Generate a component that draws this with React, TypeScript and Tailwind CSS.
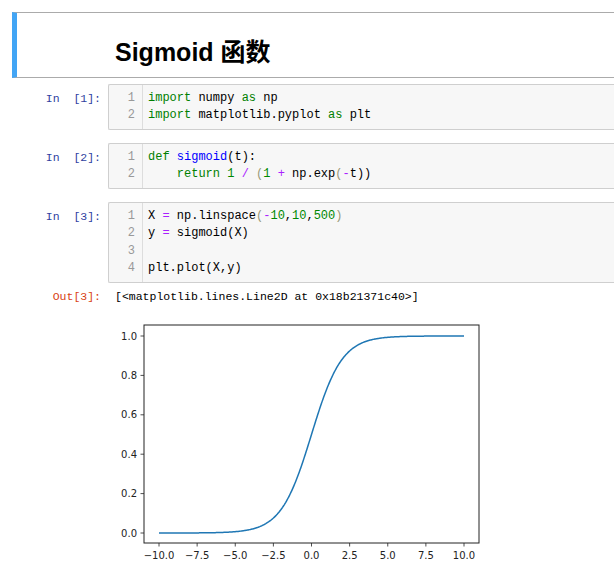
import React from 'react';

// small token helpers for the code cells
const K = ({ children }: { children: React.ReactNode }) => <span className="text-[#008000]">{children}</span>;
const N = ({ children }: { children: React.ReactNode }) => <span className="text-[#008800]">{children}</span>;
const O = ({ children }: { children: React.ReactNode }) => <span className="text-[#aa22ff]">{children}</span>;
const B = ({ children }: { children: React.ReactNode }) => <span className="text-[#999977]">{children}</span>;
const D = ({ children }: { children: React.ReactNode }) => <span className="text-[#0000ff]">{children}</span>;

const mono = "font-['Liberation_Mono','DejaVu_Sans_Mono',monospace]";

const Prompt = ({ label, out }: { label: string; out?: boolean }) => (
  <div className={`w-[108px] shrink-0 pr-[7px] text-right text-[11.5px] leading-[17.5px] whitespace-pre ${mono} ${out ? 'text-[#d84315]' : 'text-[#303f9f] pt-[5.5px]'}`}>
    {label}
  </div>
);

const CodeCell = ({ n, lines }: { n: number; lines: React.ReactNode[] }) => (
  <div className="flex">
    <Prompt label={`In\u00a0\u00a0[${n}]:`} />
    <div className={`flex flex-1 border border-r-0 border-[#cfcfcf] rounded-l-[2px] bg-[#f7f7f7] text-[12px] leading-[17.5px] ${mono}`}>
      <div className="w-[34px] shrink-0 border-r border-[#dddddd] py-[4.5px] pr-[7px] text-right text-[#999999]">
        {lines.map((_, i) => (
          <div key={i}>{i + 1}</div>
        ))}
      </div>
      <div className="py-[4.5px] pl-[5px] text-black whitespace-pre">
        {lines.map((l, i) => (
          <div key={i} className="h-[17.5px]">{l}</div>
        ))}
      </div>
    </div>
  </div>
);

const Plot = () => {
  const xs = (t: number) => 203.5 + 15.25 * t;
  const ys = (v: number) => 225 - 197 * v;
  const pts: string[] = [];
  for (let i = 0; i <= 400; i++) {
    const t = -10 + (20 * i) / 400;
    const v = 1 / (1 + Math.exp(-t));
    pts.push(`${xs(t).toFixed(2)},${ys(v).toFixed(2)}`);
  }
  const yt = [0, 0.2, 0.4, 0.6, 0.8, 1.0];
  const xt = [-10, -7.5, -5, -2.5, 0, 2.5, 5, 7.5, 10];
  const fmt = (t: number) => (t < 0 ? '\u2212' : '') + Math.abs(t).toFixed(1);
  return (
    <svg width="400" height="268" viewBox="0 0 400 268" className="block">
      <polyline points={pts.join(' ')} fill="none" stroke="#1f77b4" strokeWidth="1.5" />
      <rect x="36" y="17" width="335" height="218" fill="none" stroke="#222" strokeWidth="1" />
      <g fontFamily="'DejaVu Sans', sans-serif" fontSize="10" fill="#222">
        {yt.map((v) => (
          <g key={v}>
            <line x1="32.5" x2="36" y1={ys(v)} y2={ys(v)} stroke="#222" strokeWidth="0.8" />
            <text x="29" y={ys(v) + 3.6} textAnchor="end">{v.toFixed(1)}</text>
          </g>
        ))}
        {xt.map((t) => (
          <g key={t}>
            <line x1={xs(t)} x2={xs(t)} y1="235" y2="238.5" stroke="#222" strokeWidth="0.8" />
            <text x={xs(t)} y="250.5" textAnchor="middle">{fmt(t)}</text>
          </g>
        ))}
      </g>
    </svg>
  );
};

export default function App() {
  return (
    <div className="w-[614px] h-[581px] overflow-hidden bg-white">
      <div className="w-[720px] pt-[12px]">
        {/* markdown header cell */}
        <div className="ml-[12px] border-y border-[#ababab] border-l-[5px] border-l-[#42a5f5]">
          <h1 className="pl-[98px] pt-[23px] pb-[9px] text-[25px] leading-[32px] font-bold text-black font-['Liberation_Sans','Noto_Sans_CJK_SC',sans-serif]">
            Sigmoid 函数
          </h1>
        </div>

        <div className="mt-[6px] flex flex-col gap-[13px]">
          <CodeCell
            n={1}
            lines={[
              <><K>import</K> numpy <K>as</K> np</>,
              <><K>import</K> matplotlib.pyplot <K>as</K> plt</>,
            ]}
          />
          <CodeCell
            n={2}
            lines={[
              <><K>def</K> <D>sigmoid</D>(t):</>,
              <>    <K>return</K> <N>1</N> <O>/</O> <B>(</B><N>1</N> <O>+</O> np.exp<B>(</B><O>-</O>t))</>,
            ]}
          />
          <div>
            <CodeCell
              n={3}
              lines={[
                <>X <O>=</O> np.linspace<B>(</B><O>-</O><N>10</N>,<N>10</N>,<N>500</N><B>)</B></>,
                <>y <O>=</O> sigmoid(X)</>,
                <></>,
                <>plt.plot(X,y)</>,
              ]}
            />
            <div className="mt-[5px] flex">
              <Prompt label="Out[3]:" out />
              <div className={`pl-[7px] text-[11.5px] leading-[17.5px] text-black whitespace-pre ${mono}`}>
                [&lt;matplotlib.lines.Line2D at 0x18b21371c40&gt;]
              </div>
            </div>
            <div className="ml-[108px] mt-[2px]">
              <Plot />
            </div>
          </div>
        </div>
      </div>
    </div>
  );
}
